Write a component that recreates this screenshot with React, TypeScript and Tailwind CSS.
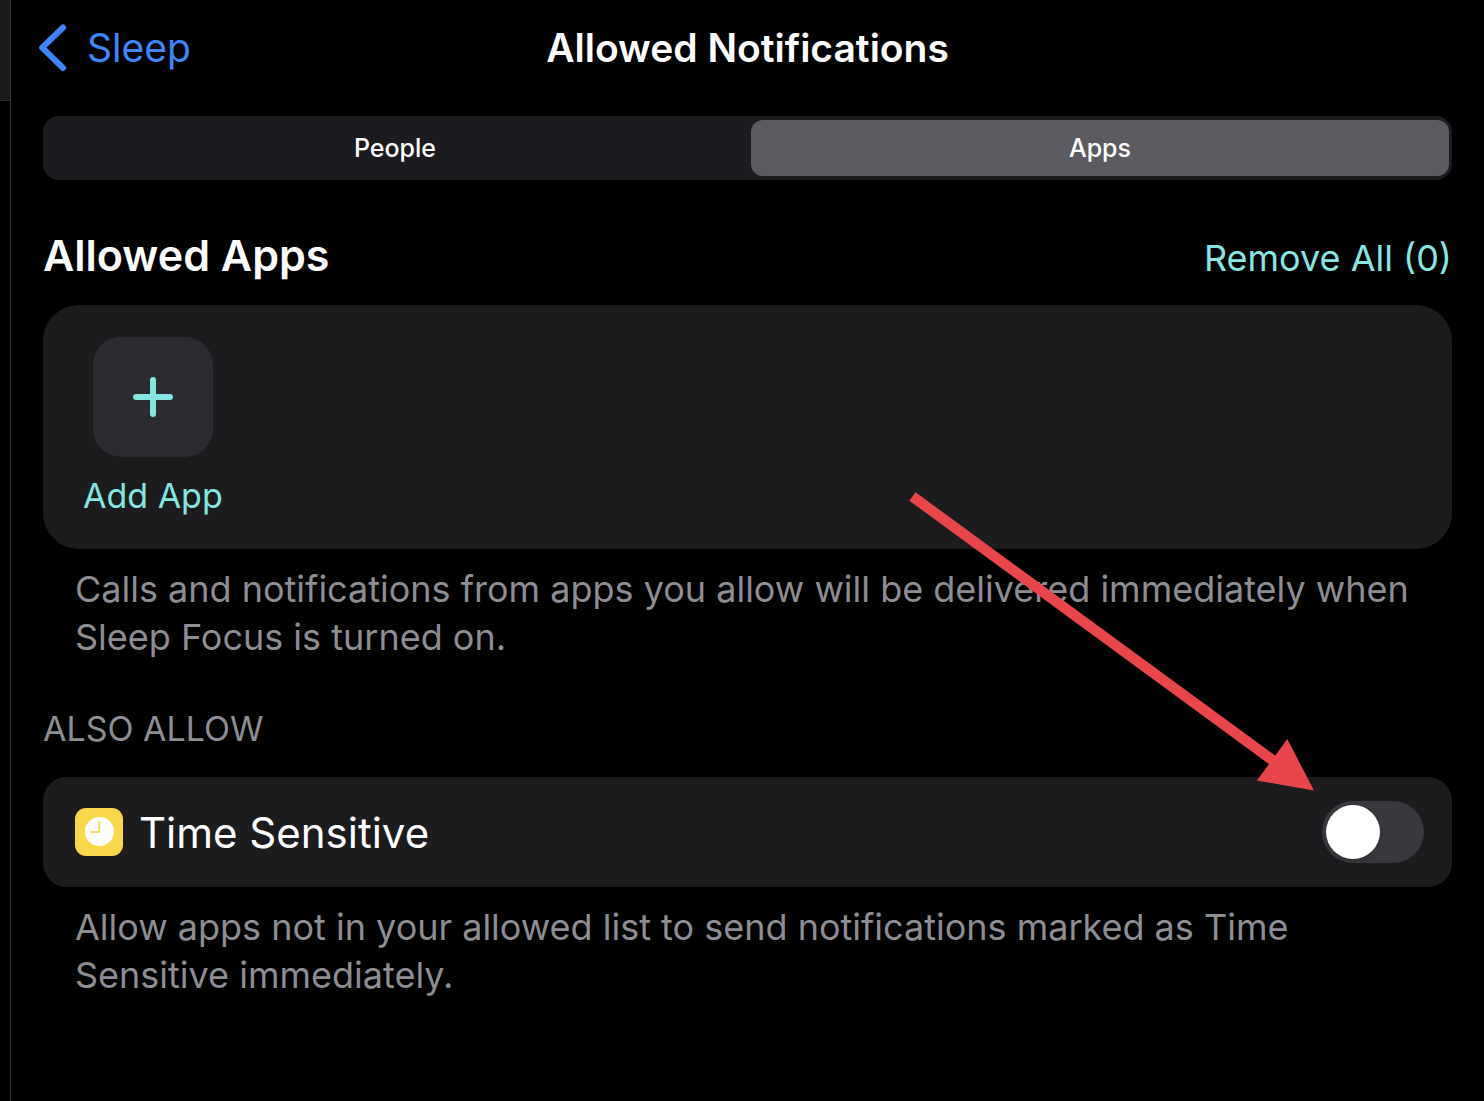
import { useState } from "react";

export default function App() {
  const [tab, setTab] = useState("Apps");
  const [on, setOn] = useState(false);
  return (
    <div className="relative flex min-h-screen bg-black font-['Inter',sans-serif] text-white">
      <div className="w-[11px] shrink-0 border-r border-[#38383a]">
        <div className="h-[101px] border-b border-[#2c2c2e] bg-[#1a1a1b]" />
      </div>
      <main className="min-w-0 flex-1 px-8">
        <header className="grid h-24 grid-cols-[1fr_auto_1fr] items-center">
          <a href="#sleep" className="-ml-1 flex items-center gap-5 text-[39px] text-[#3e85f7]">
            <svg width="28" height="48" viewBox="0 0 28 48" fill="none" stroke="currentColor" strokeWidth="6" strokeLinecap="round" strokeLinejoin="round" aria-hidden="true">
              <path d="M24 3.500 3.200 23.700 24 44" />
            </svg>
            Sleep
          </a>
          <h1 className="text-[39px] font-semibold">Allowed Notifications</h1>
        </header>

        <div className="mt-5 flex h-16 gap-[7px] rounded-2xl bg-[#1c1c20] px-[3px] py-1">
          {["People", "Apps"].map((name) => (
            <button
              key={name}
              type="button"
              aria-pressed={tab === name}
              onClick={() => setTab(name)}
              className={
                tab === name
                  ? "flex-1 rounded-xl bg-[#5b5a60] pt-0.5 text-[25px] font-medium"
                  : "flex-1 rounded-xl pt-0.5 text-[25px] font-medium"
              }
            >
              {name}
            </button>
          ))}
        </div>

        <section>
          <div className="mt-10 flex h-[70px] items-baseline justify-between">
            <h2 className="text-[43px] leading-[70px] font-semibold">Allowed Apps</h2>
            <button type="button" className="text-[36px] text-[#85e5e0]">Remove All (0)</button>
          </div>
          <div className="mt-[15px] h-[244px] rounded-[36px] bg-[#1c1c1e] px-10 pt-8">
            <button type="button" className="flex flex-col items-center gap-3 text-[34px] leading-[54px] text-[#85e5e0]">
              <span className="flex size-[120px] items-center justify-center rounded-[28px] bg-[#2c2b30]">
                <svg width="40" height="40" viewBox="0 0 40 40" stroke="currentColor" strokeWidth="6" strokeLinecap="round" aria-hidden="true">
                  <path d="M20 3v34M3 20h34" />
                </svg>
              </span>
              Add App
            </button>
          </div>
          <p className="mt-4 px-8 text-[36px] leading-[48px] text-[#8d8d93]">
            Calls and notifications from apps you allow will be delivered immediately when Sleep Focus is turned on.
          </p>
        </section>

        <section>
          <h3 className="mt-11 text-[34px] leading-[48px] text-[#8d8d93]">ALSO ALLOW</h3>
          <div className="mt-6 flex h-[110px] items-center rounded-3xl bg-[#1c1c1e] pr-7 pl-8">
            <svg width="48" height="48" viewBox="0 0 48 48" aria-hidden="true">
              <rect width="48" height="48" rx="11" fill="#f8d74a" />
              <circle cx="24.400" cy="23.600" r="14.500" fill="#fff" />
              <path d="M24.200 14v10H16" fill="none" stroke="#f9dc62" strokeWidth="2" strokeLinecap="round" strokeLinejoin="round" />
            </svg>
            <label htmlFor="sensitive" className="ml-4 flex-1 text-[42px]">Time Sensitive</label>
            <span className="relative h-[62px] w-[102px]">
              <input id="sensitive" type="checkbox" role="switch" checked={on} onChange={() => setOn(!on)} className="peer size-full appearance-none rounded-full bg-[#39383d] checked:bg-[#30d158]" />
              <span className="pointer-events-none absolute top-1 left-1 size-[54px] rounded-full bg-white shadow-md peer-checked:translate-x-10" />
            </span>
          </div>
          <p className="mt-4 px-8 text-[36px] leading-[48px] text-[#8d8d93]">
            Allow apps not in your allowed list to send notifications marked as Time Sensitive immediately.
          </p>
        </section>
      </main>
      <svg className="pointer-events-none absolute top-[490px] right-[168px]" width="408" height="302" viewBox="908 490 408 302" aria-hidden="true">
        <path d="M912.500 496.500 1275 762" stroke="#e9464b" strokeWidth="10.500" />
        <path d="M1314 790.500 1287.300 739 1257 780.500Z" fill="#e9464b" />
      </svg>
    </div>
  );
}
